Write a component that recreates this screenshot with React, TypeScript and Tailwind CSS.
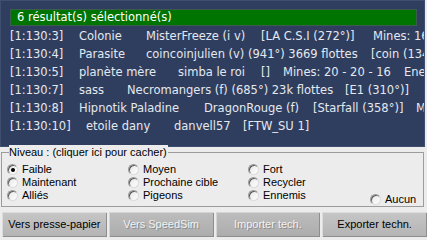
type Seg = { t: string; w?: string };

const rows: Seg[][] = [
  [
    { t: "[1:130:3]", w: "w-[69px]" },
    { t: "Colonie", w: "w-[67px]" },
    { t: "MisterFreeze (i v)", w: "w-[115px]" },
    { t: "[LA C.S.I (272°)]", w: "w-[112px]" },
    { t: "Mines: 16" },
  ],
  [
    { t: "[1:130:4]", w: "w-[69px]" },
    { t: "Parasite", w: "w-[67px]" },
    { t: "coincoinjulien (v) (941°) 3669 flottes", w: "w-[225px]" },
    { t: "[coin (134" },
  ],
  [
    { t: "[1:130:5]", w: "w-[69px]" },
    { t: "planète mère", w: "w-[99px]" },
    { t: "simba le roi", w: "w-[83px]" },
    { t: "[]", w: "w-[22px]" },
    { t: "Mines: 20 - 20 - 16", w: "w-[121px]" },
    { t: "Ene" },
  ],
  [
    { t: "[1:130:7]", w: "w-[69px]" },
    { t: "sass", w: "w-[48px]" },
    { t: "Necromangers (f) (685°) 23k flottes", w: "w-[218px]" },
    { t: "[E1 (310°)]" },
  ],
  [
    { t: "[1:130:8]", w: "w-[69px]" },
    { t: "Hipnotik Paladine", w: "w-[125px]" },
    { t: "DragonRouge (f)", w: "w-[109px]" },
    { t: "[Starfall (358°)]", w: "w-[103px]" },
    { t: "M" },
  ],
  [
    { t: "[1:130:10]", w: "w-[76px]" },
    { t: "etoile dany", w: "w-[88px]" },
    { t: "danvell57", w: "w-[69px]" },
    { t: "[FTW_SU 1]" },
  ],
];

function Radio({ label, checked = false }: { label: string; checked?: boolean }) {
  return (
    <div className="flex h-[13px] items-center gap-[4px]">
      <span className="flex h-[11px] w-[11px] shrink-0 items-center justify-center rounded-full border border-[#9a9a9a] border-r-[#dcdcdc] border-b-[#dcdcdc] bg-gradient-to-br from-[#e6e6e6] to-white shadow-[inset_1px_1px_0_#5a5a5a]">
        {checked && <span className="h-[4px] w-[4px] rounded-full bg-black" />}
      </span>
      <span className="leading-none">{label}</span>
    </div>
  );
}

function Btn({ label, disabled = false }: { label: string; disabled?: boolean }) {
  return (
    <button
      type="button"
      className={
        disabled
          ? "flex h-[25px] w-[105px] items-center justify-center bg-gradient-to-b from-[#bdbdbd] to-[#acacac] text-[11px] text-[#f2f2f2] shadow-[inset_1px_1px_0_#d4d4d4,inset_-1px_-1px_0_#8e8e8e] [text-shadow:1px_1px_0_#8a8a8a]"
          : "flex h-[25px] w-[105px] items-center justify-center bg-gradient-to-b from-[#c6c6c6] to-[#b4b4b4] text-[11px] text-black shadow-[inset_1px_1px_0_#dcdcdc,inset_-1px_-1px_0_#8e8e8e]"
      }
    >
      {label}
    </button>
  );
}

export default function App() {
  return (
    <div className="flex h-[240px] w-[427px] flex-col overflow-hidden bg-[#ececec] font-['Liberation_Sans',Arial,sans-serif]">
      <div className="h-[147px] w-[425px] overflow-hidden border border-[#3e4e6e] bg-[#2f3e5e] pl-[9px] pt-[8px] font-['DejaVu_Sans',sans-serif]">
        <div className="flex h-[17px] w-[407px] items-center border border-[#3c5c52] bg-[#007400] pl-[6px] text-[11.5px] text-white">
          6 résultat(s) sélectionné(s)
        </div>
        <div className="mt-[1px] text-[11.5px] leading-[18px] text-[#e4e8f0]">
          {rows.map((r, i) => (
            <div key={i} className="flex whitespace-pre">
              {r.map((s) => (
                <span key={s.t} className={s.w ? `${s.w} shrink-0` : "shrink-0"}>
                  {s.t}
                </span>
              ))}
            </div>
          ))}
        </div>
      </div>

      <div className="relative ml-[1px] mt-[5px] h-[55px] w-[423px] border border-[#9c9c9c] pl-[5px] pt-[10px] text-[11px] text-black">
        <span className="absolute -top-[8px] left-[7px] bg-[#ececec] pr-[1px] text-[11px] leading-[14px]">
          Niveau : (cliquer ici pour cacher)
        </span>
        <div className="flex">
          <div className="flex w-[121px] flex-col">
            <Radio label="Faible" checked />
            <Radio label="Maintenant" />
            <Radio label="Alliés" />
          </div>
          <div className="flex w-[120px] flex-col">
            <Radio label="Moyen" />
            <Radio label="Prochaine cible" />
            <Radio label="Pigeons" />
          </div>
          <div className="flex w-[122px] flex-col">
            <Radio label="Fort" />
            <Radio label="Recycler" />
            <Radio label="Ennemis" />
          </div>
          <div className="flex flex-col justify-end">
            <div className="translate-y-[4px]">
              <Radio label="Aucun" />
            </div>
          </div>
        </div>
      </div>

      <div className="mt-[5px] flex gap-[2px] pl-[2px]">
        <Btn label="Vers presse-papier" />
        <Btn label="Vers SpeedSim" disabled />
        <Btn label="Importer tech." disabled />
        <Btn label="Exporter techn." />
      </div>
    </div>
  );
}
